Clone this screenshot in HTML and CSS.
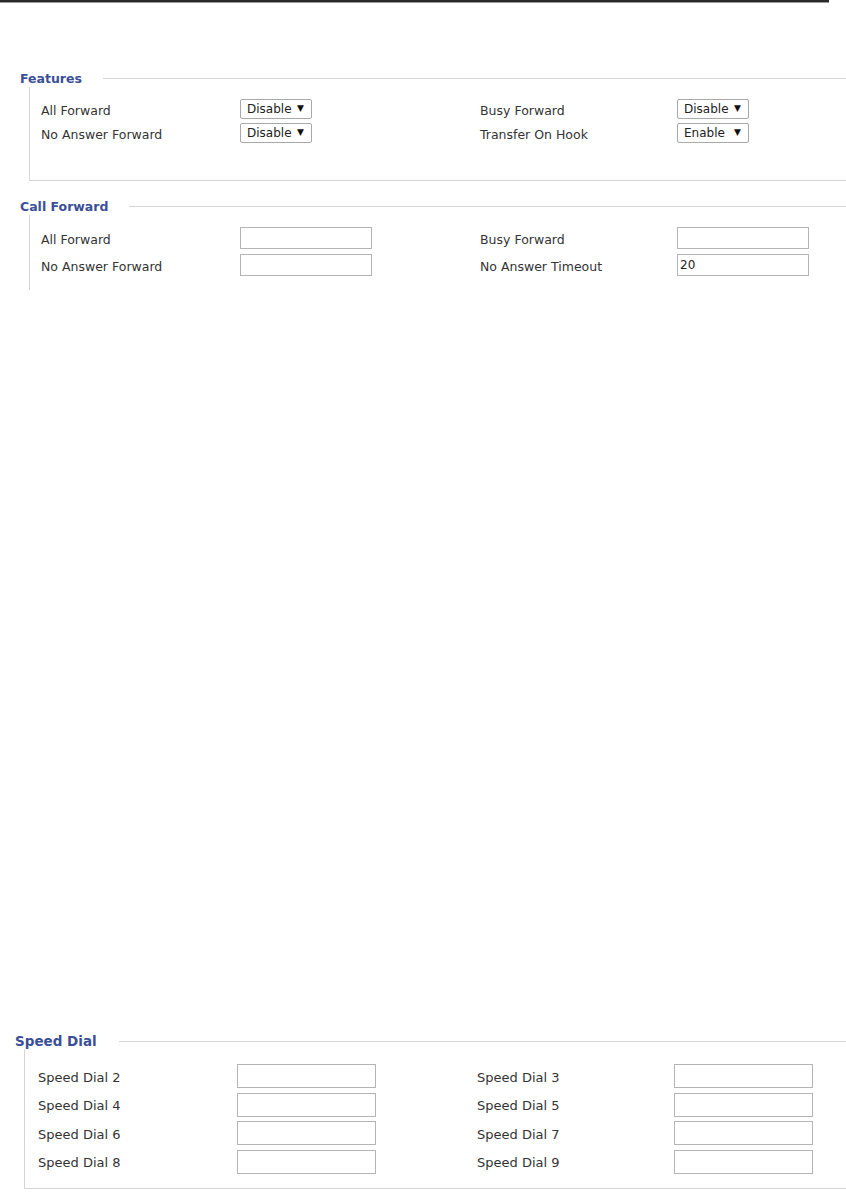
FILE: index.html
```html
<!DOCTYPE html>
<html>
<head>
<meta charset="utf-8">
<link rel="stylesheet" href="styles.css">
</head>
<body>
<div class="topline"></div>

<section class="group features">
  <div class="legend"><span class="legend-text">Features</span></div>
  <div class="body boxed">
    <div class="grid">
      <span class="label">All Forward</span>
      <span class="sel"><select><option>Disable</option></select></span>
      <span class="label">Busy Forward</span>
      <span class="sel"><select><option>Disable</option></select></span>
      <span class="label">No Answer Forward</span>
      <span class="sel"><select><option>Disable</option></select></span>
      <span class="label">Transfer On Hook</span>
      <span class="sel"><select><option>Enable</option></select></span>
    </div>
  </div>
</section>

<section class="group callfwd">
  <div class="legend"><span class="legend-text">Call Forward</span></div>
  <div class="body open">
    <div class="grid">
      <span class="label">All Forward</span>
      <input class="txt" type="text" value="">
      <span class="label">Busy Forward</span>
      <input class="txt" type="text" value="">
      <span class="label">No Answer Forward</span>
      <input class="txt" type="text" value="">
      <span class="label">No Answer Timeout</span>
      <input class="txt" type="text" value="20">
    </div>
  </div>
</section>

<section class="group speed">
  <div class="legend"><span class="legend-text">Speed Dial</span></div>
  <div class="body boxed">
    <div class="grid">
      <span class="label">Speed Dial 2</span>
      <input class="txt" type="text" value="">
      <span class="label">Speed Dial 3</span>
      <input class="txt" type="text" value="">
      <span class="label">Speed Dial 4</span>
      <input class="txt" type="text" value="">
      <span class="label">Speed Dial 5</span>
      <input class="txt" type="text" value="">
      <span class="label">Speed Dial 6</span>
      <input class="txt" type="text" value="">
      <span class="label">Speed Dial 7</span>
      <input class="txt" type="text" value="">
      <span class="label">Speed Dial 8</span>
      <input class="txt" type="text" value="">
      <span class="label">Speed Dial 9</span>
      <input class="txt" type="text" value="">
    </div>
  </div>
</section>
</body>
</html>
```

FILE: styles.css
```css
html, body {
  margin: 0;
  padding: 0;
  background: #ffffff;
}

body {
  font-family: "DejaVu Sans", Verdana, sans-serif;
  font-size: 12.5px;
  color: #333333;
  width: 846px;
  overflow: hidden;
}

.topline {
  width: 829px;
  height: 2px;
  background: #2a2a2a;
  border-bottom: 1px solid #9a9a9a;
}

.group {
  display: flex;
  flex-direction: column;
}

.legend {
  display: flex;
  align-items: center;
  height: 17px;
  padding-left: 20px;
}

.legend::after {
  content: "";
  flex: 1;
  height: 0;
  border-top: 1px solid #d4d4d4;
  margin-left: 21px;
}

.legend-text {
  font-family: "DejaVu Sans", Verdana, sans-serif;
  font-weight: bold;
  font-size: 12.5px;
  color: #3a4f98;
  letter-spacing: 0;
}

.body {
  margin-left: 29px;
  border-left: 1px solid #d4d4d4;
  padding-left: 11px;
}

.boxed {
  border-bottom: 1px solid #d4d4d4;
}

.grid {
  display: grid;
  grid-template-columns: 199px 240px 197px 140px;
  align-items: center;
}

.label {
  white-space: nowrap;
  position: relative;
  top: 1px;
}

/* Features */
.features {
  margin-top: 67px;
}
.features .body {
  height: 94px;
  padding-top: 12px;
  box-sizing: border-box;
}
.features .grid {
  row-gap: 4px;
}

.sel {
  position: relative;
  display: inline-block;
  width: 72px;
  height: 20px;
}

.sel select {
  -webkit-appearance: none;
  appearance: none;
  width: 72px;
  height: 20px;
  margin: 0;
  padding: 0 0 0 6px;
  border: 1px solid #a8a8a8;
  border-radius: 2px;
  background: #ffffff;
  font-family: "DejaVu Sans", Verdana, sans-serif;
  font-size: 12px;
  color: #222222;
  box-sizing: border-box;
}

.sel::after {
  content: "\25BC";
  position: absolute;
  right: 8px;
  top: 4px;
  font-size: 9px;
  color: #111111;
  pointer-events: none;
}

.txt {
  width: 132px;
  height: 22px;
  margin: 0;
  padding: 0 0 0 2px;
  border: 1px solid #b4b4b4;
  background: #ffffff;
  font-family: "DejaVu Sans", Verdana, sans-serif;
  font-size: 12px;
  color: #222222;
  box-sizing: border-box;
}

/* Call Forward */
.callfwd {
  margin-top: 17px;
}
.callfwd .body {
  height: 75px;
  padding-top: 12px;
  box-sizing: border-box;
}
.callfwd .grid {
  row-gap: 5px;
}

/* Speed Dial */
.speed {
  margin-top: 742px;
}
.speed .legend {
  padding-left: 15px;
  height: 18px;
}
.speed .legend::after {
  margin-left: 22px;
}
.speed .legend-text {
  font-size: 13.5px;
}
.speed .body {
  margin-left: 24px;
  padding-left: 13px;
  padding-top: 14px;
  height: 139px;
  box-sizing: border-box;
}
.speed .label {
  font-size: 13px;
}
.speed .grid {
  row-gap: 4.5px;
  grid-template-columns: 199px 240px 197px 140px;
}
.speed .txt {
  width: 139px;
  height: 24px;
}
```
